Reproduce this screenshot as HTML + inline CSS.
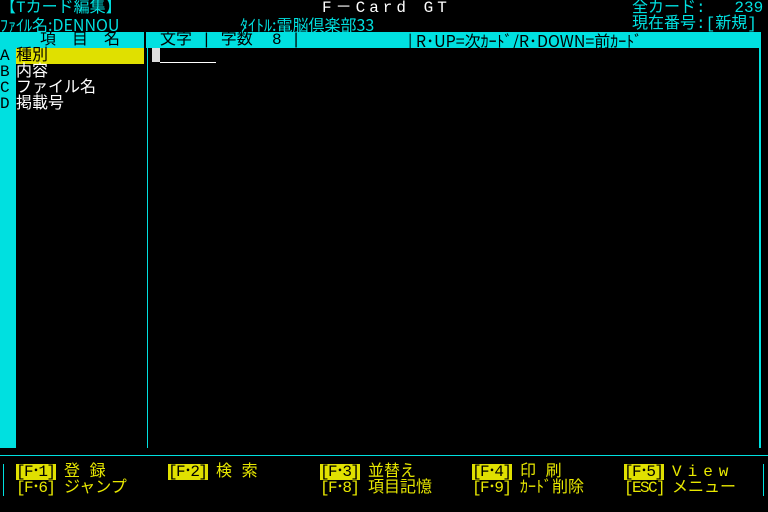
<!DOCTYPE html>
<html><head><meta charset="utf-8"><style>
body{margin:0;background:#000;width:768px;height:512px;overflow:hidden;position:relative;font-family:"Liberation Mono","Noto Sans CJK JP",monospace;}
.t{position:absolute;font-size:16px;line-height:16px;white-space:pre;}
.c{color:#00e0e0}.w{color:#fff}.y{color:#e8e800}.k{color:#000}
.b{position:absolute}
.n{font-family:"Noto Sans CJK JP",monospace;font-size:16px}
.f{letter-spacing:-1.6px;width:40px;}
</style></head><body>
<div class="b" style="left:0;top:32px;width:760px;height:16px;background:#00e0e0"></div>
<div class="b" style="left:0;top:48px;width:16px;height:400px;background:#00e0e0"></div>
<div class="b" style="left:144px;top:32px;width:2px;height:16px;background:#000"></div>
<div class="b" style="left:147px;top:48px;width:1px;height:400px;background:#00e0e0"></div>
<div class="b" style="left:759px;top:32px;width:2px;height:416px;background:#00e0e0"></div>
<div class="b" style="left:16px;top:48px;width:128px;height:16px;background:#e0e000"></div>
<div class="b" style="left:0;top:455px;width:768px;height:1px;background:#00e0e0"></div>
<div class="b" style="left:3px;top:464px;width:1px;height:32px;background:#00e0e0"></div>
<div class="b" style="left:763px;top:464px;width:1px;height:32px;background:#00e0e0"></div>
<div class="b" style="left:152px;top:48px;width:8px;height:14px;background:#ddd"></div>
<div class="b" style="left:160px;top:62px;width:56px;height:1px;background:#fff"></div>

<div class="t c" style="left:0;top:0">【Tカード編集】</div>
<div class="t w" style="left:322px;top:0;letter-spacing:4px">F－Card GT</div>
<div class="t c" style="left:632px;top:0">全カード:   239</div>
<div class="t c n" style="left:0;top:16px">ﾌｧｲﾙ名:DENNOU</div>
<div class="t c n" style="left:240px;top:16px">ﾀｲﾄﾙ:電脳倶楽部33</div>
<div class="t c" style="left:632px;top:16px">現在番号:[新規]</div>
<div class="t k" style="left:40px;top:32px">項　目　名</div>
<div class="t k" style="left:160px;top:32px">文字 | 字数  8 |</div>
<div class="t k n" style="left:408px;top:32px">| R･UP=次ｶｰﾄﾞ/R･DOWN=前ｶｰﾄﾞ</div>
<div class="t k" style="left:0;top:48px">A</div><div class="t k" style="left:0;top:64px">B</div>
<div class="t k" style="left:0;top:80px">C</div><div class="t k" style="left:0;top:96px">D</div>
<div class="t k" style="left:16px;top:48px">種別</div>
<div class="t w" style="left:16px;top:64px">内容</div>
<div class="t w" style="left:16px;top:80px">ファイル名</div>
<div class="t w" style="left:16px;top:96px">掲載号</div>

<div class="t k f" style="left:16px;top:464px;background:#e0e000">[F･1]</div><div class="t y" style="left:64px;top:464px">登 録</div>
<div class="t k f" style="left:168px;top:464px;background:#e0e000">[F･2]</div><div class="t y" style="left:216px;top:464px">検 索</div>
<div class="t k f" style="left:320px;top:464px;background:#e0e000">[F･3]</div><div class="t y" style="left:368px;top:464px">並替え</div>
<div class="t k f" style="left:472px;top:464px;background:#e0e000">[F･4]</div><div class="t y" style="left:520px;top:464px">印 刷</div>
<div class="t k f" style="left:624px;top:464px;background:#e0e000">[F･5]</div><div class="t y" style="left:672px;top:464px;letter-spacing:6px">View</div>
<div class="t y f" style="left:16px;top:480px">[F･6]</div><div class="t y" style="left:64px;top:480px">ジャンプ</div>
<div class="t y f" style="left:320px;top:480px">[F･8]</div><div class="t y" style="left:368px;top:480px">項目記憶</div>
<div class="t y f" style="left:472px;top:480px">[F･9]</div><div class="t y" style="left:520px;top:480px">ｶｰﾄﾞ削除</div>
<div class="t y f" style="left:624px;top:480px">[ESC]</div><div class="t y" style="left:672px;top:480px">メニュー</div>
</body></html>
